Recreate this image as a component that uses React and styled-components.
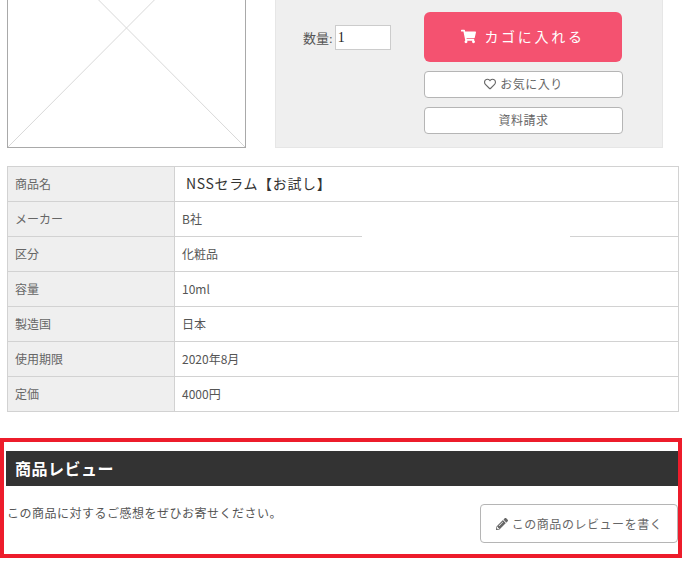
import React from "react";
import styled, { createGlobalStyle } from "styled-components";
import { FaShoppingCart, FaRegHeart, FaPencilAlt } from "react-icons/fa";

const sans = `"Noto Sans CJK JP", "Liberation Sans", sans-serif`;

const GlobalStyle = createGlobalStyle`
  body {
    margin: 0;
    background: #fff;
    color: #555;
    font-family: ${sans};
    font-size: 12px;
  }
`;

const Page = styled.div`
  width: 685px;
  height: 562px;
  overflow: hidden;
`;

const Top = styled.div`
  display: flex;
  height: 148px;
  padding-left: 7px;
  gap: 29px;
`;

const Photo = styled.div`
  width: 237px;
  height: 147px;
  border: solid 1px #a9a9a9;
  border-top: none;
  flex-shrink: 0;

  svg {
    display: block;
  }
`;

const BuyPanel = styled.div`
  width: 388px;
  height: 148px;
  box-sizing: border-box;
  border: solid 1px #e6e6e6;
  border-top: none;
  background: #efefef;
  display: flex;
  padding: 12px 0 0 27px;
`;

const Qty = styled.label`
  width: 121px;
  height: 25px;
  margin-top: 13px;
  display: flex;
  align-items: center;
  gap: 2px;
  font-family: "Liberation Serif", "Noto Sans CJK JP", serif;
  font-size: 13px;
  color: #555;
`;

const QtyInput = styled.input`
  width: 56px;
  height: 25px;
  box-sizing: border-box;
  border: solid 1px #ccc;
  padding: 0 2px;
  background: #fff;
  font-family: "Liberation Serif", serif;
  font-size: 14px;
  color: #222;
  outline: none;
`;

const Actions = styled.div`
  width: 199px;
  display: flex;
  flex-direction: column;
`;

const CartButton = styled.button`
  height: 50px;
  margin: 0 1px 9px 0;
  border: none;
  border-radius: 6px;
  background: #f45270;
  color: #fff;
  font-family: ${sans};
  font-size: 14px;
  letter-spacing: 2.7px;
  display: flex;
  align-items: center;
  justify-content: center;
  gap: 8px;
  padding: 0 0 2px;

  svg {
    font-size: 15px;
  }
`;

const SubButton = styled.button`
  height: 27px;
  margin-bottom: 9px;
  box-sizing: border-box;
  border: solid 1px #b5b5b5;
  border-radius: 4px;
  background: #fff;
  color: #666;
  font-family: ${sans};
  font-size: 12px;
  letter-spacing: 0.5px;
  display: flex;
  align-items: center;
  justify-content: center;
  gap: 4px;
  padding: 0 0 2px;
`;

const Specs = styled.table`
  width: 672px;
  margin: 18px 0 26px 7px;
  border-collapse: collapse;
  table-layout: fixed;
`;

const Label = styled.th`
  width: 167px;
  height: 35px;
  box-sizing: border-box;
  padding: 0 0 2px 7px;
  border: solid 1px #d2d2d2;
  background: #efefef;
  color: #666;
  font-size: 12px;
  font-weight: 400;
  text-align: left;
`;

const Value = styled.td`
  height: 35px;
  box-sizing: border-box;
  padding: 0 0 2px ${(props) => (props.$lead ? "11px" : "7px")};
  border: solid 1px #d2d2d2;
  color: ${(props) => (props.$lead ? "#333" : "#555")};
  font-size: ${(props) => (props.$lead ? "14px" : "12px")};
  letter-spacing: ${(props) => (props.$lead ? "0.65px" : "0")};
  position: relative;
`;

const LineGap = styled.span`
  position: absolute;
  left: 187px;
  bottom: -1px;
  width: 208px;
  height: 1px;
  background: #fff;
`;

const ReviewFrame = styled.section`
  width: 682px;
  height: 120px;
  box-sizing: border-box;
  border: solid 4px #ed1c2b;
  padding: 9px 0 0 2px;
`;

const ReviewTitle = styled.h2`
  margin: 0;
  height: 35px;
  padding-left: 9px;
  background: #333;
  color: #fff;
  font-size: 16px;
  font-weight: 700;
  letter-spacing: 0.5px;
  line-height: 35px;
`;

const ReviewBody = styled.div`
  display: flex;
  justify-content: space-between;
  align-items: flex-start;
  padding-top: 18px;
`;

const ReviewText = styled.p`
  margin: 0;
  padding-left: 1px;
  color: #555;
  font-size: 12px;
  letter-spacing: 0.5px;
  line-height: 18px;
`;

const WriteButton = styled.button`
  width: 198px;
  height: 39px;
  box-sizing: border-box;
  border: solid 1px #b5b5b5;
  border-radius: 4px;
  background: #fff;
  color: #666;
  font-family: ${sans};
  font-size: 12px;
  letter-spacing: 0.55px;
  display: flex;
  align-items: center;
  justify-content: center;
  gap: 4px;
  padding: 0;
`;

const rows = [
  { label: "商品名", value: "NSSセラム【お試し】", lead: true },
  { label: "メーカー", value: "B社", gap: true },
  { label: "区分", value: "化粧品" },
  { label: "容量", value: "10ml" },
  { label: "製造国", value: "日本" },
  { label: "使用期限", value: "2020年8月" },
  { label: "定価", value: "4000円" },
];

const App = () => {
  return (
    <Page>
      <GlobalStyle />
      <Top>
        <Photo>
          <svg width="237" height="147" viewBox="0 91 237 147">
            <path d="M0 238L237 0M0 0L237 238" stroke="#d8d8d8" strokeWidth="1" fill="none" />
          </svg>
        </Photo>
        <BuyPanel>
          <Qty>
            数量:
            <QtyInput defaultValue="1" />
          </Qty>
          <Actions>
            <CartButton>
              <FaShoppingCart />
              カゴに入れる
            </CartButton>
            <SubButton>
              <FaRegHeart />
              お気に入り
            </SubButton>
            <SubButton>資料請求</SubButton>
          </Actions>
        </BuyPanel>
      </Top>
      <Specs>
        <tbody>
          {rows.map((row) => (
            <tr key={row.label}>
              <Label>{row.label}</Label>
              <Value $lead={row.lead}>
                {row.value}
                {row.gap && <LineGap />}
              </Value>
            </tr>
          ))}
        </tbody>
      </Specs>
      <ReviewFrame>
        <ReviewTitle>商品レビュー</ReviewTitle>
        <ReviewBody>
          <ReviewText>この商品に対するご感想をぜひお寄せください。</ReviewText>
          <WriteButton>
            <FaPencilAlt />
            この商品のレビューを書く
          </WriteButton>
        </ReviewBody>
      </ReviewFrame>
    </Page>
  );
};

export default App;
